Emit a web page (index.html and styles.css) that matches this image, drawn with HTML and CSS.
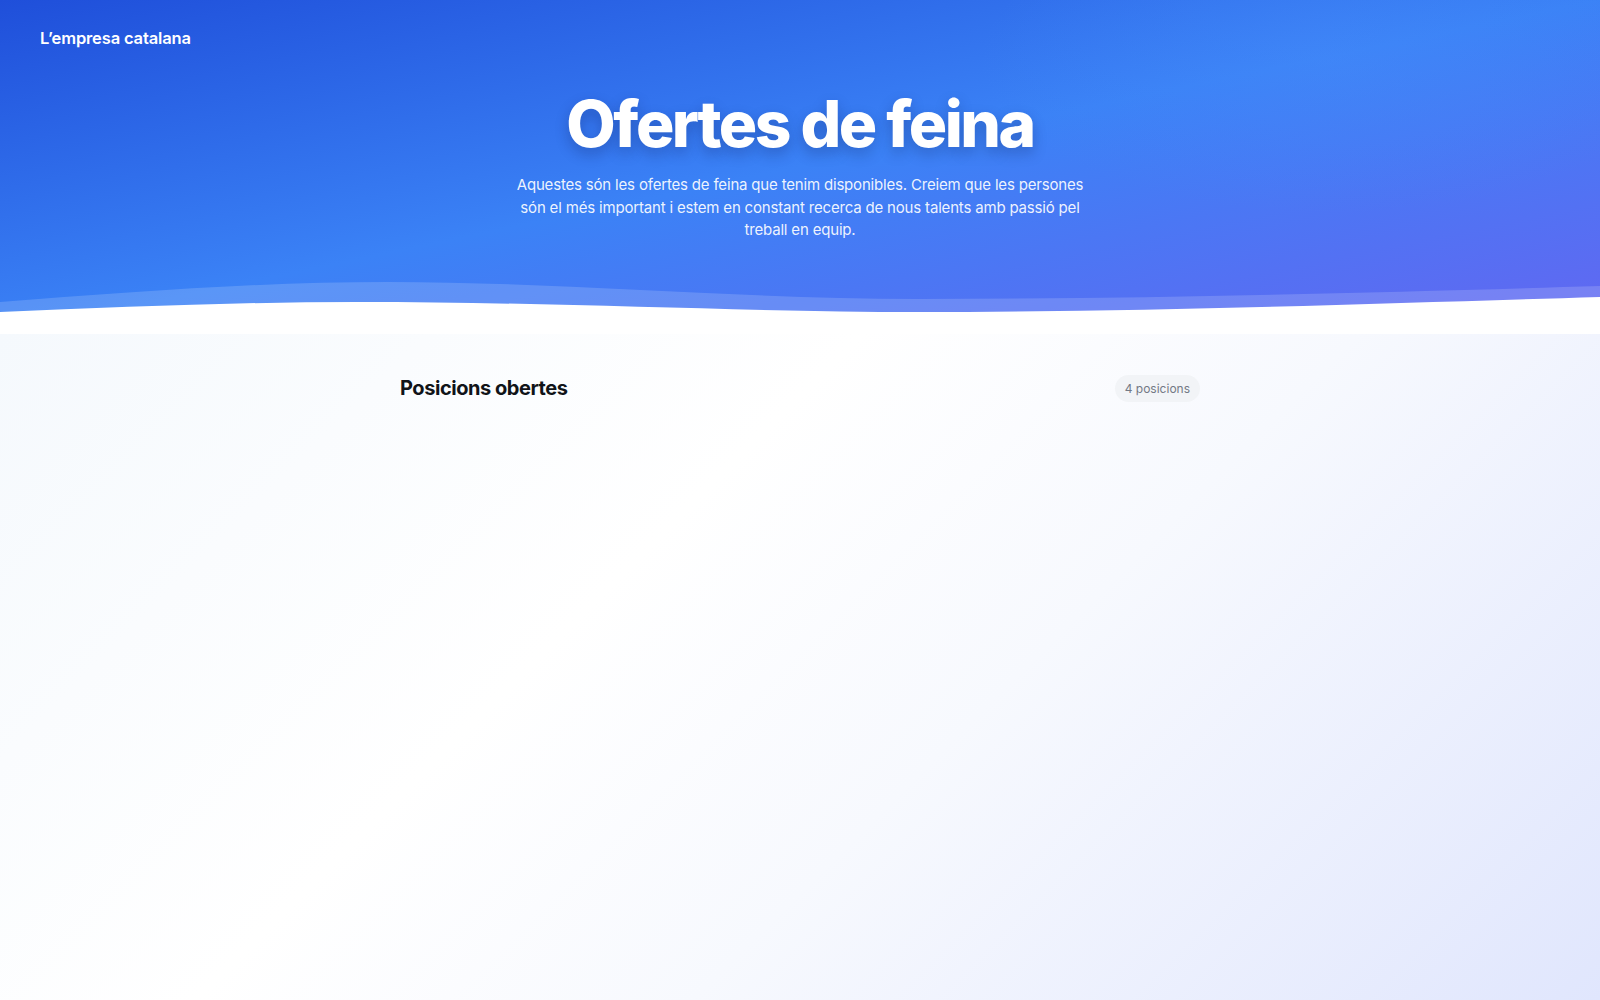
FILE: index.html
```html
<!DOCTYPE html>
<html lang="ca">
<head>
<meta charset="utf-8">
<title>Ofertes de feina</title>
<link rel="stylesheet" href="styles.css">
</head>
<body>
<header class="hero">
  <nav class="nav">
    <a class="brand" href="#">L’empresa catalana</a>
  </nav>
  <div class="hero-body">
    <h1 class="hero-title">Ofertes de feina</h1>
    <p class="hero-text">Aquestes són les ofertes de feina que tenim disponibles. Creiem que les persones són el més important i estem en constant recerca de nous talents amb passió pel treball en equip.</p>
  </div>
  <svg class="wave" viewBox="0 0 1600 60" preserveAspectRatio="none" aria-hidden="true">
    <path class="wave-light" d="M0,28 C130,18 260,8 388,8 C560,8 740,25 918,25 C1150,25 1400,18 1600,12 L1600,60 L0,60 Z"/>
    <path class="wave-white" d="M0,38 C120,33 240,28 357,28 C560,28 740,38 918,38 C1150,38 1400,29 1600,23 L1600,60 L0,60 Z"/>
  </svg>
</header>
<main class="jobs">
  <div class="container">
    <div class="jobs-head">
      <h2 class="jobs-title">Posicions obertes</h2>
      <span class="badge">4 posicions</span>
    </div>
  </div>
</main>
</body>
</html>
```
FILE: styles.css
```css
* { box-sizing: border-box; }
html, body { margin: 0; padding: 0; }
body {
  font-family: Inter, "Noto Sans", "Liberation Sans", sans-serif;
  min-height: 1000px;
  display: flex;
  flex-direction: column;
  background: #ffffff;
}
.hero {
  background:
    radial-gradient(ellipse 500px 220px at 1330px 60px, rgba(70, 140, 250, 0.35), rgba(70, 140, 250, 0) 70%),
    linear-gradient(to bottom right, #1f4fda 0%, #3b82f6 50%, #6366f1 100%);
  color: #fff;
  display: flex;
  flex-direction: column;
}
.nav {
  padding: 27px 40px 0;
  height: 76px;
}
.brand {
  color: #fff;
  text-decoration: none;
  font-size: 16.5px;
  font-weight: 600;
  line-height: 22px;
  letter-spacing: -0.15px;
}
.hero-body {
  display: flex;
  flex-direction: column;
  align-items: center;
  text-align: center;
  padding: 12px 20px 0;
}
.hero-title {
  margin: 0;
  font-size: 64px;
  line-height: 72px;
  font-weight: 800;
  letter-spacing: -2.5px;
  text-shadow: 0 6px 14px rgba(15, 30, 90, 0.3);
}
.hero-text {
  margin: 14px 0 0;
  max-width: 580px;
  font-size: 15px;
  line-height: 22.5px;
  letter-spacing: -0.18px;
  color: rgba(255, 255, 255, 0.92);
}
.wave {
  display: block;
  width: 100%;
  height: 60px;
  margin-top: 32.5px;
}
.wave-light { fill: rgba(255, 255, 255, 0.16); }
.wave-white { fill: #ffffff; }
.jobs {
  flex: 1;
  background: linear-gradient(135deg, #f5f9fd 0%, #ffffff 38%, #f7f9fe 60%, #e0e6fd 100%);
}
.container {
  width: 800px;
  margin: 0 auto;
  padding-top: 40px;
}
.jobs-head {
  display: flex;
  align-items: center;
  justify-content: space-between;
}
.jobs-title {
  margin: 0;
  font-size: 20px;
  line-height: 28px;
  font-weight: 700;
  color: #111418;
  letter-spacing: -0.45px;
}
.badge {
  font-size: 12px;
  line-height: 15px;
  color: #737985;
  background: #f2f4f7;
  padding: 6px 10px;
  border-radius: 999px;
}
```
